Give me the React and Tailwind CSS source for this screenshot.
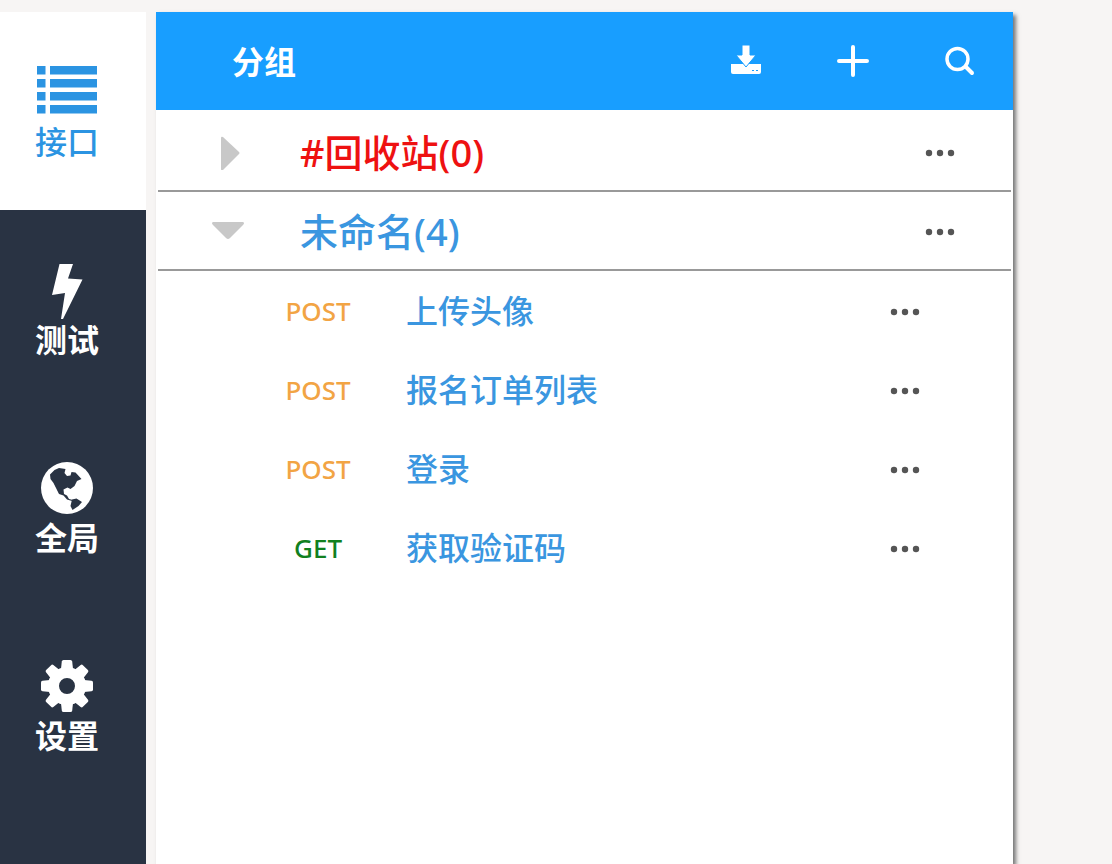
import { useState } from 'react';

const TEETH = [0, 45, 90, 135, 180, 225, 270, 315];

const NAV = [
  {
    label: '接口',
    icon: (
      <svg className="w-[60px] h-[52px]" fill="currentColor" viewBox="0 0 60 52">
        <path d="M0 0h8.500v8.500H0zM13 0h47v8.500H13zM0 13h8.500v8.500H0zM13 13h47v8.500H13zM0 26h8.500v8.500H0zM13 26h47v8.500H13zM0 39h8.500v8.500H0zM13 39h47v8.500H13z" />
      </svg>
    ),
  },
  {
    label: '测试',
    icon: (
      <svg className="w-[52px] h-[52px] overflow-visible" fill="currentColor" viewBox="0 0 52 52">
        <path d="M18.500 0h13.500l-5 14.500 14.500 1L22 55h-2l4-26-13 2z" />
      </svg>
    ),
  },
  {
    label: '全局',
    icon: (
      <svg className="w-[52px] h-[52px]" viewBox="0 0 52 52">
        <circle cx="26" cy="26" r="26" fill="currentColor" />
        <path
          fill="#293343"
          d="M9 12.500L13.500 8l4.500-2 6.500 1-1 4 2.500 3 3.500-.5 1-3.500 4 .5 6 6.500-4.500 2-2.500 5-4 3-3-1.500-4 2 .5 4.500 3 1.500 2 3.500 4 1-1 1-5-1.500-3.500-4-4.500-1.500-3-6-2.500-5-3-4zM31 37.500l4.500-1 5.500 3.500-3.500 4-6 4-2-4z"
        />
      </svg>
    ),
  },
  {
    label: '设置',
    icon: (
      <svg className="w-[52px] h-[52px]" fill="currentColor" viewBox="0 0 52 52">
        <circle cx="26" cy="26" r="13.500" fill="none" stroke="currentColor" strokeWidth="11" />
        {TEETH.map((angle) => (
          <path
            key={angle}
            transform={`rotate(${angle} 26 26)`}
            d="M22.500 0h7q1.500 0 1.700 1.500L32 9H20l.8-7.500Q21 0 22.500 0z"
          />
        ))}
      </svg>
    ),
  },
];

const ACTIONS = [
  {
    label: '导入',
    icon: (
      <svg className="w-8 h-8" viewBox="0 0 32 32">
        <path fill="currentColor" d="M1 19h30v8a2 2 0 01-2 2H3a2 2 0 01-2-2z" />
        <path
          fill="currentColor"
          stroke="#189eff"
          strokeWidth="1"
          d="M12 0h8v10h6L16 22 6 10h6z"
        />
        <path fill="#189eff" d="M22 25h2v1h-2zM26 25h2v1h-2z" />
      </svg>
    ),
  },
  {
    label: '新增',
    icon: (
      <svg className="w-8 h-8" fill="none" stroke="currentColor" viewBox="0 0 32 32">
        <path strokeLinecap="round" strokeWidth={4} d="M16 2v28M2 16h28" />
      </svg>
    ),
  },
  {
    label: '搜索',
    icon: (
      <svg className="w-8 h-8" fill="none" stroke="currentColor" viewBox="0 0 32 32">
        <circle cx="13.500" cy="14" r="10.500" strokeWidth={3.5} />
        <path strokeLinecap="round" strokeWidth={4} d="M22 22l6 6" />
      </svg>
    ),
  },
];

const GROUPS = [
  { name: '#回收站', color: 'text-[#ee1111]', items: [] },
  {
    name: '未命名',
    color: 'text-[#3a96e0]',
    items: [
      { method: 'POST', name: '上传头像' },
      { method: 'POST', name: '报名订单列表' },
      { method: 'POST', name: '登录' },
      { method: 'GET', name: '获取验证码' },
    ],
  },
];

function MoreButton({ name }) {
  return (
    <button type="button" aria-label={`${name} 更多`} className="flex-shrink-0 text-[#555]">
      <svg className="w-8 h-8" fill="currentColor" viewBox="0 0 32 32">
        <circle cx="5" cy="17" r="3.200" />
        <circle cx="16" cy="17" r="3.200" />
        <circle cx="27" cy="17" r="3.200" />
      </svg>
    </button>
  );
}

function Sidebar({ active, onSelect }) {
  return (
    <nav className="w-[146px] flex-shrink-0 flex flex-col bg-[#293343]">
      {NAV.map(({ label, icon }) => (
        <button
          key={label}
          type="button"
          onClick={() => onSelect(label)}
          className={`h-[198px] flex flex-col items-center justify-center pt-2.5 pr-3 text-[32px] leading-[48px] ${
            active === label ? 'bg-white text-[#2b94e2] font-medium' : 'text-white font-bold'
          }`}
        >
          {icon}
          <span>{label}</span>
        </button>
      ))}
    </nav>
  );
}

function Group({ group, defaultOpen }) {
  const [open, setOpen] = useState(defaultOpen);

  return (
    <section>
      <div className="h-[79px] flex items-center border-b-2 border-[#999] pl-[52px] pr-[55px]">
        <button
          type="button"
          aria-expanded={open}
          onClick={() => setOpen(!open)}
          className="flex items-center gap-[54px] flex-1 min-w-0"
        >
          <svg className="w-9 h-9 flex-shrink-0 text-[#c8c8c8]" fill="currentColor" viewBox="0 0 36 36">
            {open ? (
              <path d="M3 9h30q2 1 0 3L20 25q-2 2-4 0L3 12q-2-2 0-3z" />
            ) : (
              <path d="M11 4q0-2 2-1l16 15q1 1 0 2L13 36q-2 1-2-1z" />
            )}
          </svg>
          <span className={`whitespace-nowrap text-[38px] leading-[48px] font-medium ${group.color}`}>
            {group.name}({group.items.length})
          </span>
        </button>
        <MoreButton name={group.name} />
      </div>
      {open && (
        <ul>
          {group.items.map(({ method, name }) => (
            <li key={name} className="h-[79px] flex items-center pl-[120px] pr-[90px]">
              <span
                className={`w-20 flex-shrink-0 text-center text-[26px] leading-[48px] font-medium ${
                  method === 'GET' ? 'text-[#11801f]' : 'text-[#f2a444]'
                }`}
              >
                {method}
              </span>
              <a
                href="#api"
                className="ml-12 flex-1 whitespace-nowrap text-[32px] leading-[48px] font-medium text-[#3a96e0]"
              >
                {name}
              </a>
              <MoreButton name={name} />
            </li>
          ))}
        </ul>
      )}
    </section>
  );
}

function GroupPanel() {
  return (
    <main className="flex-1 min-w-0 ml-2.5 mr-[99px] bg-white shadow-[3px_3px_4px_#777]">
      <header className="h-[98px] flex items-center bg-[#189eff] pl-[76px] pr-[37px] text-white">
        <h1 className="flex-1 pt-0.5 text-[32px] leading-[48px] font-bold">分组</h1>
        <div className="flex items-center gap-[75px]">
          {ACTIONS.map(({ label, icon }) => (
            <button key={label} type="button" aria-label={label}>
              {icon}
            </button>
          ))}
        </div>
      </header>
      <div className="px-0.5 pt-[3px]">
        {GROUPS.map((group) => (
          <Group key={group.name} group={group} defaultOpen={group.items.length > 0} />
        ))}
      </div>
    </main>
  );
}

function App() {
  const [active, setActive] = useState('接口');

  return (
    <div className="min-h-screen flex pt-3 bg-[#f7f5f4] font-['Noto_Sans','Noto_Sans_CJK_SC',sans-serif]">
      <Sidebar active={active} onSelect={setActive} />
      <GroupPanel />
    </div>
  );
}

export default App;
